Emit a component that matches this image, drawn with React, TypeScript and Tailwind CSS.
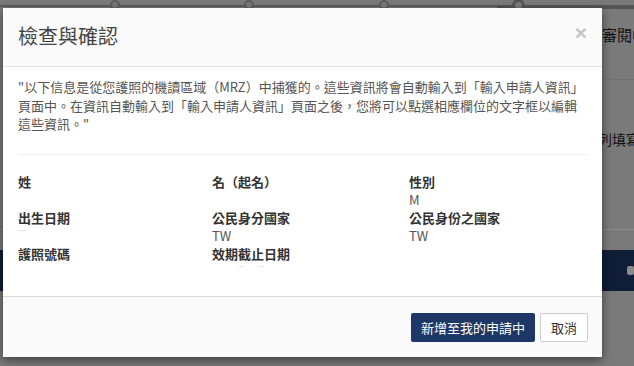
import React from "react";

const font = { fontFamily: '"Noto Sans CJK TC", "Noto Sans", "Liberation Sans", sans-serif' };

function Field({ label, value }: { label: string; value?: string }) {
  return (
    <div className="flex flex-col">
      <div className="h-[18px] text-[13px] leading-[18px] font-bold text-[#333]">{label}</div>
      <div className="h-[18px] text-[13px] leading-[18px] text-[#555]">{value ?? ""}</div>
    </div>
  );
}

export default function App() {
  return (
    <div className="relative w-[634px] h-[366px] overflow-hidden bg-[#7a7a7a]" style={font}>
      {/* background page (dimmed) */}
      <div className="flex flex-col">
        <div className="relative h-[12px]">
          <div className="absolute left-0 right-0 top-[5px] h-[2px] bg-[#5e5e5e]" />
          <div className="absolute left-[497px] right-0 top-[5px] h-[4px] bg-[#555]" />
          <div className="absolute left-[110px] top-0 w-[10px] h-[10px] rounded-full border-2 border-[#5e5e5e] bg-[#7a7a7a]" />
          <div className="absolute left-[244px] top-0 w-[10px] h-[10px] rounded-full border-2 border-[#5e5e5e] bg-[#7a7a7a]" />
          <div className="absolute left-[379px] top-0 w-[10px] h-[10px] rounded-full border-2 border-[#5e5e5e] bg-[#7a7a7a]" />
          <div className="absolute left-[512px] top-[-1px] w-[13px] h-[13px] rounded-full border-[3px] border-[#555] bg-[#7a7a7a]" />
        </div>
        <div className="pl-[602px] pt-[13px] h-[68px] border-b border-[#727272] whitespace-nowrap text-[15px] leading-[20px] text-[#111]">
          審閱中
        </div>
        <div className="pl-[598px] pt-[50px] h-[150px] border-b border-[#8a8a8a] whitespace-nowrap text-[14px] leading-[18px] text-[#111]">
          列填寫。
        </div>
        <div className="mt-[20px] h-[41px] bg-[#0f1d36] flex items-center pl-[627px]">
          <div className="w-[10px] h-[9px] rounded-[2px] bg-[#8a8a8a]" />
        </div>
      </div>

      {/* modal */}
      <div className="absolute left-[3px] top-[8px] w-[599px] h-[349px] bg-white flex flex-col shadow-[0_3px_9px_rgba(0,0,0,0.5)]">
        <div className="h-[59px] bg-[#fafafa] border-b border-[#e2e2e2] flex items-center justify-between pl-[15px] pr-[15px] shrink-0">
          <div className="text-[20px] leading-[28px] text-[#444] pb-[2px]">檢查與確認</div>
          <div className="text-[21px] leading-[20px] font-bold text-[#c4c4c4] pb-[8px]" style={{ fontFamily: '"Liberation Sans", sans-serif' }}>×</div>
        </div>
        <div className="flex-1 px-[15px] pt-[11px]">
          <p className="text-[13px] leading-[18.5px] text-[#555] whitespace-nowrap">
            "以下信息是從您護照的機讀區域（MRZ）中捕獲的。這些資訊將會自動輸入到「輸入申請人資訊」
            <br />
            頁面中。在資訊自動輸入到「輸入申請人資訊」頁面之後，您將可以點選相應欄位的文字框以編輯
            <br />
            這些資訊。"
          </p>
          <div className="mt-[20px] h-px bg-[#eeeeee] mr-[0px]" />
          <div className="pt-[18px] grid grid-cols-[194px_197px_1fr]">
            <Field label="姓" />
            <Field label="名（起名）" />
            <Field label="性別" value="M" />
            <div className="flex flex-col">
              <div className="h-[18px] text-[13px] leading-[18px] font-bold text-[#333]">出生日期</div>
              <div className="h-[18px] flex items-start pt-[3px]">
                <div className="w-[8px] h-px bg-[#e4e4e4]" />
              </div>
            </div>
            <Field label="公民身分國家" value="TW" />
            <Field label="公民身份之國家" value="TW" />
            <Field label="護照號碼" />
            <div className="flex flex-col">
              <div className="h-[18px] text-[13px] leading-[18px] font-bold text-[#333]">效期截止日期</div>
              <div className="h-[18px] flex items-start gap-[14px] pt-[3px] pl-[26px]">
                <div className="w-[6px] h-px bg-[#ececec]" />
                <div className="w-[6px] h-px bg-[#ececec]" />
              </div>
            </div>
            <div />
          </div>
        </div>
        <div className="h-[61px] bg-[#fafafa] border-t border-[#dddddd] flex items-start justify-end gap-[5px] pt-[16px] pr-[14px] shrink-0">
          <button className="h-[29px] px-[10px] rounded-[2px] bg-[#1d3866] text-white text-[13px] leading-[18px]">
            新增至我的申請中
          </button>
          <button className="h-[29px] px-[10px] rounded-[2px] bg-white border border-[#cccccc] text-[#333] text-[13px] leading-[18px]">
            取消
          </button>
        </div>
      </div>
    </div>
  );
}
